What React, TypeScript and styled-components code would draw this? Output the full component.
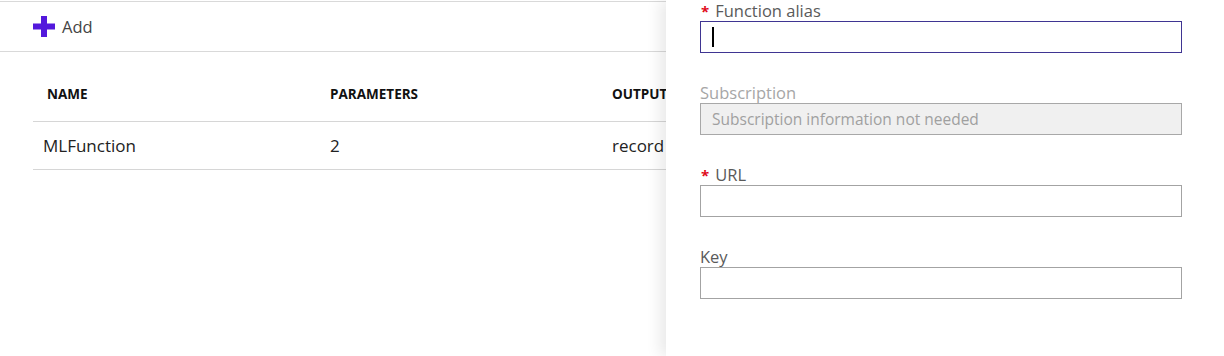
import React from "react";
import styled, { createGlobalStyle } from "styled-components";

const GlobalStyle = createGlobalStyle`
  html, body { margin: 0; padding: 0; background: #ffffff; }
  body { font-family: "Open Sans", "Noto Sans", Arial, sans-serif; }
  * { box-sizing: border-box; }
`;

const Page = styled.div`
  display: flex;
  width: 1224px;
  height: 356px;
  overflow: hidden;
  background: #ffffff;
`;

const ListPane = styled.div`
  flex: 0 0 666px;
  width: 666px;
  min-width: 0;
  overflow: hidden;
  display: flex;
  flex-direction: column;
  padding-top: 1px;
`;

const Toolbar = styled.div`
  display: flex;
  align-items: center;
  height: 51px;
  padding-left: 33px;
  border-top: 1px solid #d9d9d9;
  border-bottom: 1px solid #d9d9d9;
`;

const AddButton = styled.button`
  display: flex;
  align-items: center;
  gap: 7px;
  border: 0;
  background: none;
  padding: 0;
  font-family: "Open Sans", sans-serif;
  font-size: 16.5px;
  color: #444444;
  cursor: pointer;
`;

const Table = styled.div`
  display: grid;
  grid-template-columns: 287px 282px minmax(0, 1fr);
  margin-left: 33px;
`;

const HeadCell = styled.div<{ $pad: number }>`
  height: 70px;
  display: flex;
  align-items: flex-end;
  padding: 0 0 19px ${(p) => p.$pad}px;
  border-bottom: 1px solid #d6d6d6;
  font-family: "Open Sans", sans-serif;
  font-weight: 700;
  font-size: 13.5px;
  line-height: 16px;
  color: #111111;
  white-space: nowrap;
`;

const Cell = styled.div`
  height: 48px;
  display: flex;
  align-items: center;
  padding-left: 10px;
  border-bottom: 1px solid #d6d6d6;
  font-family: "Open Sans", sans-serif;
  font-size: 17px;
  color: #222222;
  white-space: nowrap;
`;

const Panel = styled.div`
  flex: 1;
  min-width: 0;
  position: relative;
  z-index: 1;
  background: #ffffff;
  box-shadow: -6px 0 14px rgba(0, 0, 0, 0.09);
  padding: 1px 0 0 34px;
  display: flex;
  flex-direction: column;
  gap: 30px;
`;

const Field = styled.div`
  display: flex;
  flex-direction: column;
  width: 482px;
`;

const Label = styled.label<{ $disabled?: boolean }>`
  display: flex;
  align-items: baseline;
  height: 20px;
  font-family: "Open Sans", sans-serif;
  font-size: 16.5px;
  line-height: 20px;
  color: ${(p) => (p.$disabled ? "#a6a6a6" : "#5a5a5a")};
`;

const Required = styled.span`
  color: #e00b1c;
  font-weight: 700;
  font-size: 15px;
  margin: 0 6px 0 1px;
`;

const InputWrap = styled.div`
  position: relative;
`;

const TextInput = styled.input<{ $focused?: boolean }>`
  display: block;
  width: 482px;
  height: 32px;
  margin: 0;
  padding: 0 11px;
  border: 1px solid ${(p) => (p.$focused ? "#3f3592" : "#a3a3a3")};
  background: #ffffff;
  font-family: "Open Sans", sans-serif;
  font-size: 15.5px;
  color: #222222;
  outline: none;
  caret-color: transparent;

  &:disabled {
    background: #f0f0f0;
    border-color: #a8a8a8;
  }
  &::placeholder {
    color: #a0a0a0;
    opacity: 1;
  }
`;

const Caret = styled.span`
  position: absolute;
  left: 12px;
  top: 6px;
  width: 2px;
  height: 20px;
  background: #000000;
`;

function PlusIcon() {
  return (
    <svg width="22" height="21" viewBox="0 0 22 21" aria-hidden>
      <rect x="8" y="0" width="6" height="21" fill="#5318dc" />
      <rect x="0" y="7.5" width="22" height="6" fill="#5318dc" />
    </svg>
  );
}

export default function App() {
  return (
    <>
      <GlobalStyle />
      <Page>
        <ListPane>
          <Toolbar>
            <AddButton>
              <PlusIcon />
              Add
            </AddButton>
          </Toolbar>
          <Table>
            <HeadCell $pad={14}>NAME</HeadCell>
            <HeadCell $pad={10}>PARAMETERS</HeadCell>
            <HeadCell $pad={10}>OUTPUT</HeadCell>
            <Cell>MLFunction</Cell>
            <Cell>2</Cell>
            <Cell>record</Cell>
          </Table>
        </ListPane>
        <Panel>
          <Field>
            <Label>
              <Required>*</Required>Function alias
            </Label>
            <InputWrap>
              <TextInput $focused readOnly aria-label="Function alias" />
              <Caret />
            </InputWrap>
          </Field>
          <Field>
            <Label $disabled>Subscription</Label>
            <TextInput disabled placeholder="Subscription information not needed" />
          </Field>
          <Field>
            <Label>
              <Required>*</Required>URL
            </Label>
            <TextInput readOnly aria-label="URL" />
          </Field>
          <Field>
            <Label>Key</Label>
            <TextInput readOnly aria-label="Key" />
          </Field>
        </Panel>
      </Page>
    </>
  );
}
